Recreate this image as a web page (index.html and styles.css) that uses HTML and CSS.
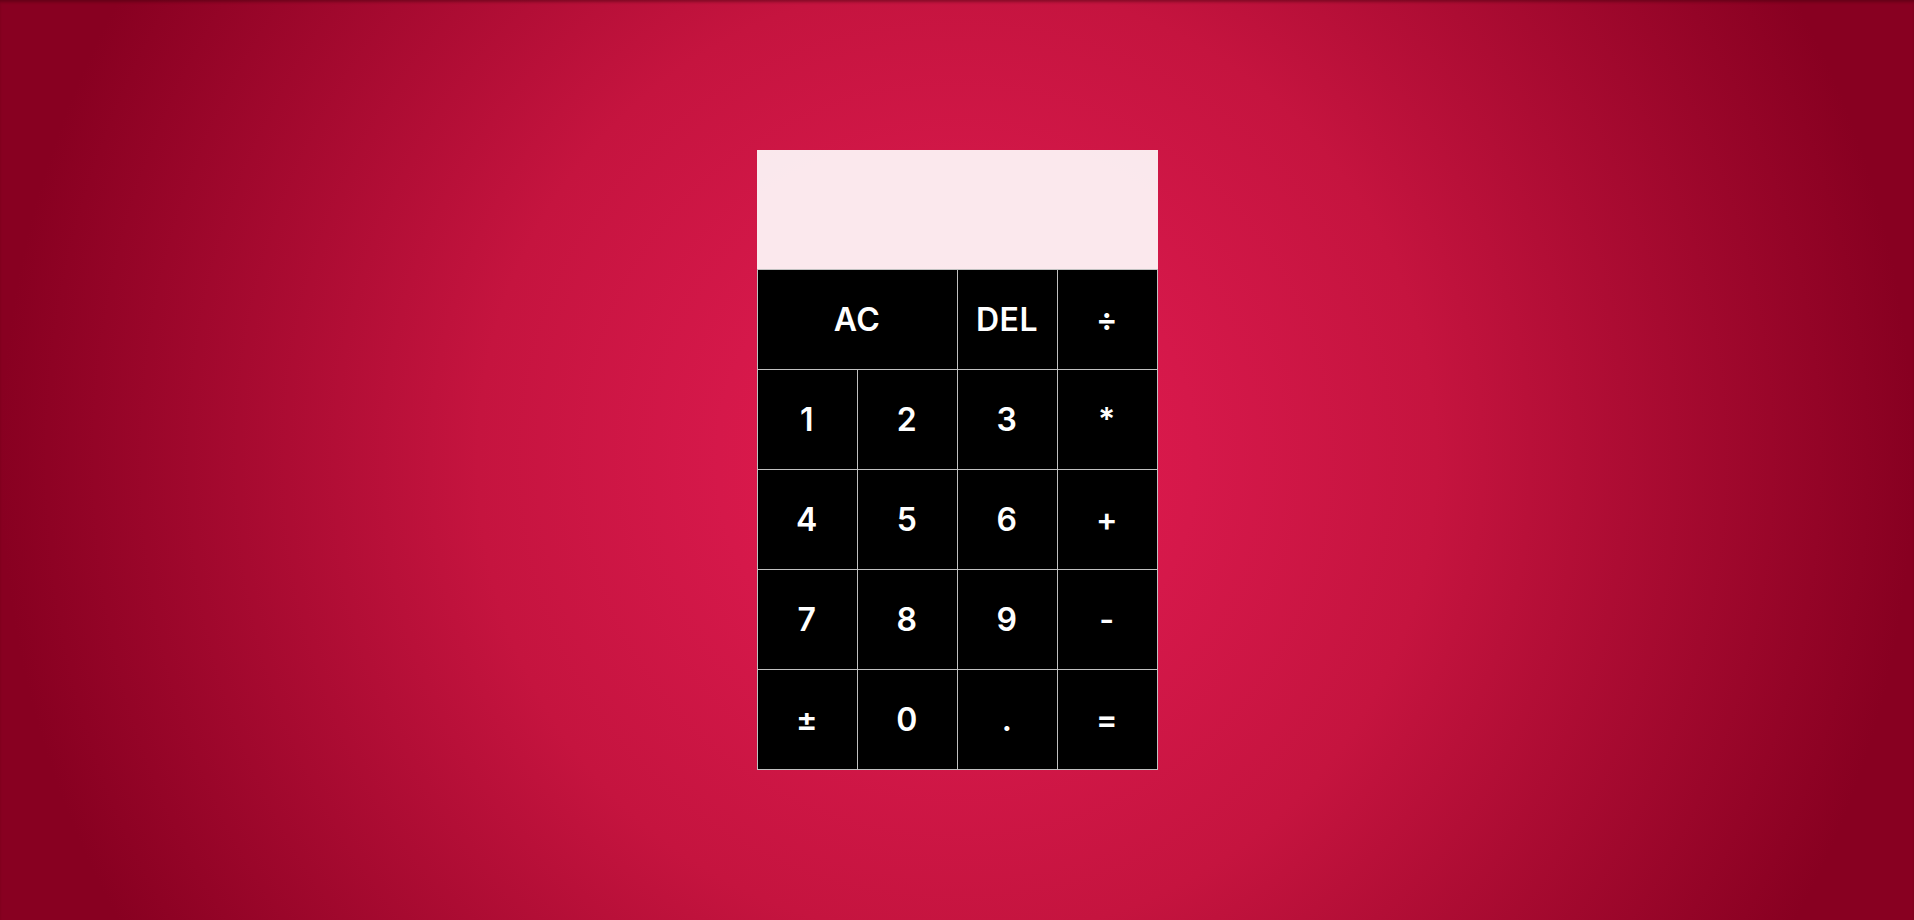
FILE: index.html
```html
<!DOCTYPE html>
<html lang="en">
<head>
<meta charset="utf-8">
<title>Calculator</title>
<link rel="stylesheet" href="styles.css">
</head>
<body>
<main class="calculator">
  <div class="display"></div>
  <div class="keys">
    <button class="key span-two">AC</button>
    <button class="key">DEL</button>
    <button class="key">÷</button>
    <button class="key">1</button>
    <button class="key">2</button>
    <button class="key">3</button>
    <button class="key">*</button>
    <button class="key">4</button>
    <button class="key">5</button>
    <button class="key">6</button>
    <button class="key">+</button>
    <button class="key">7</button>
    <button class="key">8</button>
    <button class="key">9</button>
    <button class="key">-</button>
    <button class="key">±</button>
    <button class="key">0</button>
    <button class="key">.</button>
    <button class="key">=</button>
  </div>
</main>
</body>
</html>
```

FILE: styles.css
```css
html, body {
  margin: 0;
  padding: 0;
  height: 100%;
}

body {
  min-height: 100vh;
  display: flex;
  align-items: center;
  justify-content: center;
  background: radial-gradient(circle farthest-side at center, #e71b4e 0%, #d5184a 25%, #c5143f 50%, #880021 100%);
  box-shadow: inset 0 3px 3px -1px rgba(60, 0, 10, 0.45);
  font-family: "Inter", "DejaVu Sans", sans-serif;
}

.calculator {
  width: 401px;
  display: flex;
  flex-direction: column;
}

.display {
  height: 119px;
  background: rgba(255, 255, 255, 0.9);
}

.keys {
  display: grid;
  grid-template-columns: repeat(4, 99px);
  grid-auto-rows: 99px;
  gap: 1px;
  padding: 1px;
  background: #c0c0c0;
}

.key {
  margin: 0;
  border: 0;
  padding: 0;
  background: #000;
  color: #fff;
  font-family: "Inter", "DejaVu Sans", sans-serif;
  font-size: 32px;
  font-weight: 600;
  letter-spacing: 0.5px;
  cursor: pointer;
  outline: none;
}

.span-two {
  grid-column: span 2;
}
```
